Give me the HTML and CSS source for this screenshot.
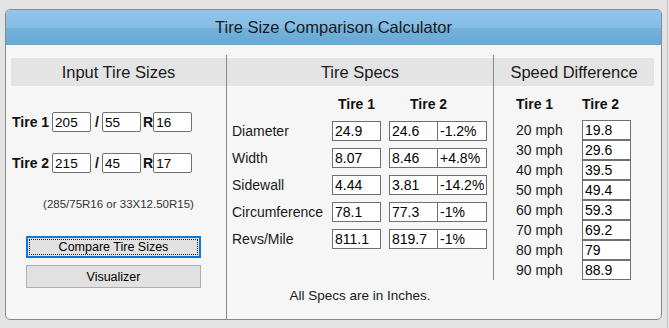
FILE: index.html
```html
<!DOCTYPE html>
<html>
<head>
    <title>Tire Size Comparison Calculator</title>
    <link rel="stylesheet" href="styles.css">
</head>
<body>
    <div class="page">
        <div class="calc">
            <div class="calc-title">Tire Size Comparison Calculator</div>
            <div class="calc-body">
                <div class="col col-input">
                    <h3>Input Tire Sizes</h3>
                    <div class="size-row first">
                        <label>Tire 1</label>
                        <input type="text" value="205">
                        <span class="slash">/</span>
                        <input type="text" value="55">
                        <span class="rim">R</span>
                        <input type="text" value="16">
                    </div>
                    <div class="size-row">
                        <label>Tire 2</label>
                        <input type="text" value="215">
                        <span class="slash">/</span>
                        <input type="text" value="45">
                        <span class="rim">R</span>
                        <input type="text" value="17">
                    </div>
                    <div class="hint">(285/75R16 or 33X12.50R15)</div>
                    <button class="btn btn-focus">Compare Tire Sizes</button>
                    <button class="btn">Visualizer</button>
                </div>
                <div class="col col-specs">
                    <h3>Tire Specs</h3>
                    <div class="spec-grid">
                        <span></span>
                        <b class="head-1">Tire 1</b>
                        <span></span>
                        <b class="head-2">Tire 2</b>
                        <span></span>

                        <span class="spec-label">Diameter</span>
                        <input type="text" value="24.9">
                        <span></span>
                        <input type="text" value="24.6">
                        <input type="text" class="pct" value="-1.2%">

                        <span class="spec-label">Width</span>
                        <input type="text" value="8.07">
                        <span></span>
                        <input type="text" value="8.46">
                        <input type="text" class="pct" value="+4.8%">

                        <span class="spec-label">Sidewall</span>
                        <input type="text" value="4.44">
                        <span></span>
                        <input type="text" value="3.81">
                        <input type="text" class="pct" value="-14.2%">

                        <span class="spec-label">Circumference</span>
                        <input type="text" value="78.1">
                        <span></span>
                        <input type="text" value="77.3">
                        <input type="text" class="pct" value="-1%">

                        <span class="spec-label">Revs/Mile</span>
                        <input type="text" value="811.1">
                        <span></span>
                        <input type="text" value="819.7">
                        <input type="text" class="pct" value="-1%">
                    </div>
                    <p class="note">All Specs are in Inches.</p>
                </div>
                <div class="col col-speed">
                    <h3>Speed Difference</h3>
                    <div class="speed-grid">
                        <b>Tire 1</b><b>Tire 2</b>
                        <span>20 mph</span><input type="text" value="19.8">
                        <span>30 mph</span><input type="text" value="29.6">
                        <span>40 mph</span><input type="text" value="39.5">
                        <span>50 mph</span><input type="text" value="49.4">
                        <span>60 mph</span><input type="text" value="59.3">
                        <span>70 mph</span><input type="text" value="69.2">
                        <span>80 mph</span><input type="text" value="79">
                        <span>90 mph</span><input type="text" value="88.9">
                    </div>
                </div>
            </div>
        </div>
    </div>
</body>
</html>
```

FILE: styles.css
```css
body {
    margin: 0;
    background: #e3e3e3;
    font-family: "Liberation Sans", Arial, sans-serif;
    color: #1a1a1a;
}
.page {
    width: 668px;
    height: 328px;
    box-sizing: border-box;
    padding: 9px 0 0 5px;
    border-right: 1px solid #c6c6c6;
}
.calc {
    width: 657px;
    height: 311px;
    box-sizing: border-box;
    border: 1px solid #8a8a8a;
    border-radius: 5px;
    background: #f6f6f6;
    overflow: hidden;
}
.calc-title {
    height: 35px;
    line-height: 35px;
    text-align: center;
    font-size: 16.5px;
    color: #1a1a1a;
    background: linear-gradient(#90c5ec 0%, #85bde6 50%, #72b2dd 51%, #68a9d3 100%);
}
.calc-body {
    display: grid;
    grid-template-columns: 216px 266px 161px;
    height: 264px;
    padding: 10px 0 0 5px;
}
h3 {
    margin: 3px 0 0 0;
    height: 28px;
    line-height: 28px;
    background: #e4e4e4;
    font-size: 16.5px;
    font-weight: normal;
    text-align: center;
    color: #1a1a1a;
}
input {
    box-sizing: border-box;
    height: 20px;
    margin: 0;
    padding: 0 2px;
    border: 1px solid #707070;
    background: #fff;
    color: #000;
    font-family: "Liberation Sans", Arial, sans-serif;
    font-size: 14px;
}

/* input column */
.col-input {
    border-right: 1px solid #8a8a8a;
}
.size-row {
    display: flex;
    align-items: center;
    height: 20px;
    margin-top: 21px;
    padding-left: 1px;
    font-size: 14px;
    font-weight: bold;
    color: #111;
}
.size-row.first {
    margin-top: 26px;
}
.size-row label {
    margin-right: 3px;
}
.size-row input {
    width: 39px;
    border-radius: 2px;
    font-size: 13.5px;
}
.slash {
    margin: 0 3px 0 4px;
}
.rim {
    margin-left: 2px;
}
.hint {
    margin-top: 24px;
    line-height: 14px;
    font-size: 11.5px;
    text-align: center;
    color: #333;
}
.btn {
    display: block;
    width: 175px;
    margin-left: 15px;
    padding: 0;
    border: 1px solid #adadad;
    background: #e1e1e1;
    color: #000;
    font-family: "Liberation Sans", Arial, sans-serif;
    font-size: 12.5px;
}
.btn-focus {
    height: 22px;
    margin-top: 25px;
    border: 2px solid #0f78d6;
    outline: 1px dotted #222;
    outline-offset: -4px;
}
.btn + .btn {
    height: 23px;
    margin-top: 7px;
}

/* spec column */
.spec-grid {
    display: grid;
    grid-template-columns: 100px 49px 8px 49px 49px;
    grid-template-rows: 19px;
    grid-auto-rows: 20px;
    row-gap: 7px;
    margin-top: 9px;
    padding-left: 5px;
    font-size: 14px;
}
.spec-grid b {
    font-size: 14px;
    color: #111;
    line-height: 19px;
}
.head-1 {
    text-align: center;
}
.head-2 {
    padding-left: 21px;
    white-space: nowrap;
}
.spec-label {
    line-height: 20px;
}
.spec-grid .pct {
    margin-left: -1px;
    width: 50px;
}
.note {
    margin: 39px 0 0 0;
    line-height: 16px;
    font-size: 13.5px;
    text-align: center;
}

/* speed column */
.col-speed {
    align-self: start;
    border-left: 1px solid #8a8a8a;
}
.speed-grid {
    display: grid;
    grid-template-columns: 66px 49px;
    grid-template-rows: 25px;
    grid-auto-rows: 20px;
    margin-top: 9px;
    padding-left: 22px;
    font-size: 14px;
}
.speed-grid b {
    line-height: 19px;
    color: #111;
}
.speed-grid span {
    line-height: 20px;
}
```
